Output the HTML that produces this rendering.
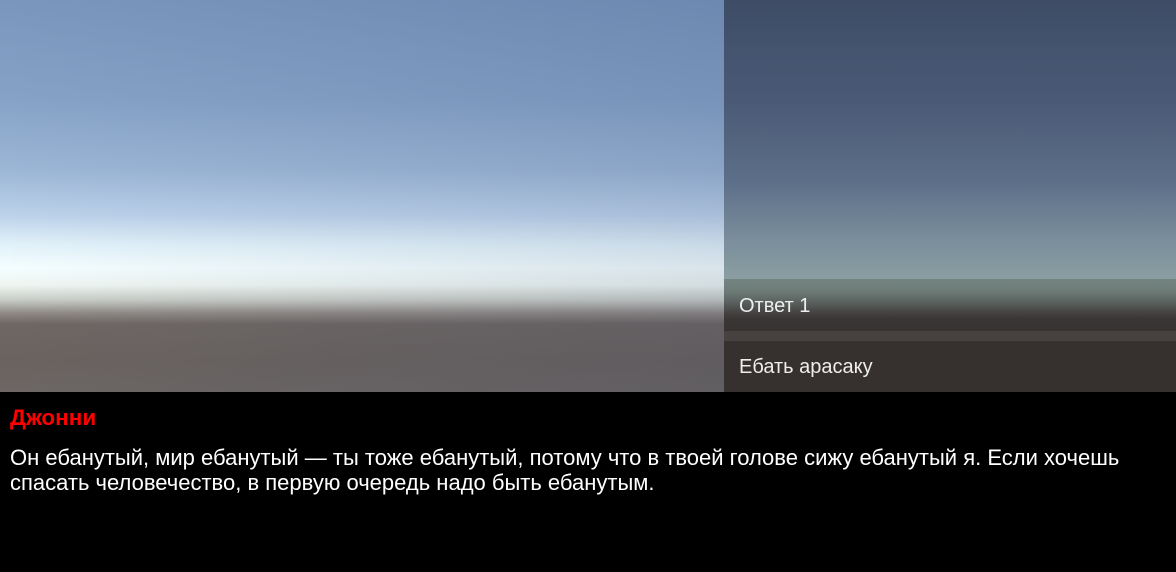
<!DOCTYPE html>
<html><head><meta charset="utf-8"><style>
*{margin:0;padding:0}
body{width:1176px;height:572px;background:#000;overflow:hidden;position:relative;font-family:"Liberation Sans",sans-serif}
#sky{position:absolute;left:0;top:0;width:724px;height:392px;
background:linear-gradient(180deg,#7a96bc 0px,#86a2c6 100px,#9cb6d6 170px,#bcd2ea 215px,#e2f2fa 245px,#f4feff 268px,#eef6f2 285px,#c8ccc6 300px,#908a86 313px,#6e6764 324px,#6a6360 360px,#6c6664 392px);}
#skyh{position:absolute;left:0;top:0;width:724px;height:392px;background:linear-gradient(90deg,rgba(0,0,0,0),rgba(20,40,90,0.12))}
#right{position:absolute;left:724px;top:0;width:452px;height:392px;
background:linear-gradient(180deg,#3e4c66 0,#4a5a76 100px,#5c6e88 180px,#7a8e9c 240px,#8a9ea2 279px)}
.b{position:absolute;left:724px;width:452px;color:#eee;font-size:20px;box-sizing:border-box;padding-left:15px}
#b1{top:279px;height:52px;line-height:54px;background:linear-gradient(180deg,#748480 0,#6e7c78 12px,#5c6462 22px,#444240 34px,#3a3635 40px,#363332 52px)}
#gap{position:absolute;left:724px;top:331px;width:452px;height:10px;background:#474240}
#b2{top:341px;height:51px;line-height:52px;background:#36302e}
#name{position:absolute;left:10px;top:405px;color:#f00;font-weight:bold;font-size:22.5px}
#txt{position:absolute;left:10px;top:445px;width:1150px;color:#fff;font-size:22px;line-height:25px}
</style></head><body>
<div id="sky"></div><div id="skyh"></div>
<div id="right"></div>
<div class="b" id="b1">Ответ 1</div>
<div id="gap"></div>
<div class="b" id="b2">Ебать арасаку</div>
<div id="name">Джонни</div>
<div id="txt">Он ебанутый, мир ебанутый — ты тоже ебанутый, потому что в твоей голове сижу ебанутый я. Если хочешь спасать человечество, в первую очередь надо быть ебанутым.</div>
</body></html>
